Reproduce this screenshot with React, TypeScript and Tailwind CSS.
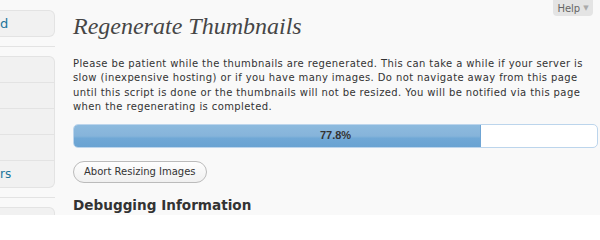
import React from "react";

const sidebarRows = ["", "", "", "", "rs"];

function Sidebar() {
  return (
    <div className="w-[55px] shrink-0 pt-[10px]">
      <div className="h-[27px] rounded-r-[6px] border border-l-0 border-[#e3e3e3] bg-[#f1f1f1] text-[13px] leading-[25px] text-[#21759b] font-['DejaVu_Sans',sans-serif]">
        d
      </div>
      <div className="my-[9px] h-px bg-[#e3e3e3]" />
      <div className="rounded-r-[6px] border border-l-0 border-[#e3e3e3] bg-[#f1f1f1] overflow-hidden">
        {sidebarRows.map((t, i) => (
          <div
            key={i}
            className={`h-[26px] text-[12px] leading-[26px] text-[#21759b] font-['DejaVu_Sans',sans-serif] ${
              i < sidebarRows.length - 1 ? "border-b border-[#e3e3e3]" : ""
            }`}
          >
            {t}
          </div>
        ))}
      </div>
      <div className="my-[9px] h-px bg-[#e3e3e3]" />
      <div className="h-[30px] rounded-r-[6px] border border-l-0 border-[#e3e3e3] bg-[#f1f1f1]" />
    </div>
  );
}

export default function App() {
  const percent = 77.8;
  return (
    <div className="relative w-[600px] h-[215px] overflow-hidden bg-[#f9f9f9] flex">
      <Sidebar />

      <div className="ml-[18px] w-[525px] shrink-0">
        <h2 className="mt-[12px] text-[24px] leading-[28px] italic text-[#464646] font-['Liberation_Serif',serif]">
          Regenerate Thumbnails
        </h2>

        <p className="mt-[17px] whitespace-nowrap text-[10px] leading-[14.4px] tracking-[0.4px] text-[#333] font-['DejaVu_Sans',sans-serif]">
          Please be patient while the thumbnails are regenerated. This can take a while if your server is
          <br />
          slow (inexpensive hosting) or if you have many images. Do not navigate away from this page
          <br />
          until this script is done or the thumbnails will not be resized. You will be notified via this page
          <br />
          when the regenerating is completed.
        </p>

        <div className="relative mt-[9px] h-[24px] rounded-[5px] border border-[#bcd5ec] bg-white overflow-hidden">
          <div
            className="h-full border-r border-[#6fa5d4] bg-[linear-gradient(to_bottom,#8dbade_0%,#86b4da_50%,#70a8d6_60%,#6aa3d2_100%)]"
            style={{ width: `${percent}%` }}
          />
          <div className="absolute inset-0 flex items-center justify-center text-[11px] font-bold text-[#333] font-['Liberation_Sans',sans-serif]">
            {percent}%
          </div>
        </div>

        <button className="mt-[13px] h-[22px] px-[10px] rounded-full border border-[#bbb] bg-[linear-gradient(to_bottom,#fefefe,#f0f0f0)] text-[10px] text-[#333] font-['DejaVu_Sans',sans-serif]">
          Abort Resizing Images
        </button>

        <h3 className="mt-[13px] text-[13.6px] leading-[18px] font-bold text-[#333] font-['DejaVu_Sans',sans-serif]">
          Debugging Information
        </h3>
      </div>

      <div className="absolute top-0 right-[7px] h-[16px] w-[40px] rounded-b-[4px] bg-[#e4e4e4] flex items-center justify-center gap-[3px] text-[10px] text-[#666] font-['DejaVu_Sans',sans-serif]">
        Help <span className="text-[7px] text-[#aaa]">▼</span>
      </div>
    </div>
  );
}
